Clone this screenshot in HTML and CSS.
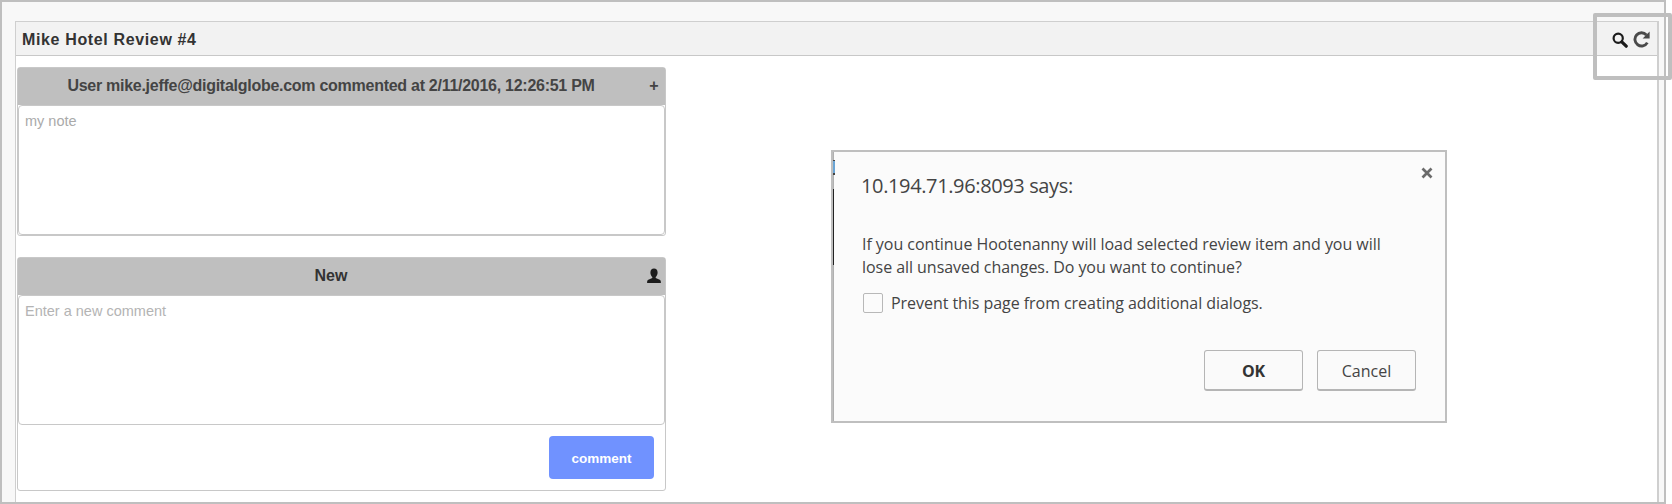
FILE: index.html
```html
<!DOCTYPE html>
<html lang="en">
<head>
<meta charset="utf-8">
<title>Mike Hotel Review #4</title>
<link rel="stylesheet" href="styles.css">
</head>
<body>
<main class="frame">
  <section class="panel">
    <header class="panel-head">
      <h1 class="panel-title">Mike Hotel Review #4</h1>
      <div class="tools">
        <svg class="search" viewBox="0 0 16 16"><circle cx="6.2" cy="6.2" r="4.6" fill="none" stroke="#1c1c1c" stroke-width="2.2"/><path d="M9.8 9.8l4.4 4.4" stroke="#1c1c1c" stroke-width="3.2" stroke-linecap="round"/></svg>
        <svg class="refresh" viewBox="0 0 17 17"><path d="M13.4 3.9A6.6 6.6 0 1 0 14.3 11.6" fill="none" stroke="#4a4a4a" stroke-width="2.9"/><path d="M16.6 .4V7.4H9.6z" fill="#4a4a4a"/></svg>
      </div>
    </header>
    <div class="comments">
      <article class="card">
        <header class="card-head"><span class="card-title user">User mike.jeffe@digitalglobe.com commented at 2/11/2016, 12:26:51 PM</span><span class="plus">+</span></header>
        <div class="note">my note</div>
      </article>
      <article class="card new-card">
        <header class="card-head"><span class="card-title new">New</span>
          <svg class="person" viewBox="0 0 14 16"><path d="M7 .5c2.2 0 3.6 1.6 3.6 4 0 1.900-.8 3.600-1.900 4.400v1.200l4 1.700c1 .5 1.200 1.400 1.200 3.200H.1c0-1.800.2-2.700 1.200-3.200l4-1.700V8.900C4.200 8.100 3.400 6.400 3.400 4.500c0-2.400 1.400-4 3.600-4z" fill="#1c1c1c"/></svg>
        </header>
        <div class="note placeholder">Enter a new comment</div>
        <div class="actions"><button class="submit">comment</button></div>
      </article>
    </div>
  </section>
</main>
<div class="highlight"></div>
<section class="dialog" role="dialog">
  <svg class="close" viewBox="0 0 12 12"><path d="M1.500 1.500l9 9M10.500 1.500l-9 9" stroke="#6b6b6b" stroke-width="2.700"/></svg>
  <h2 class="dialog-title">10.194.71.96:8093 says:</h2>
  <p class="message">If you continue Hootenanny will load selected review item and you will<br>lose all unsaved changes. Do you want to continue?</p>
  <div class="prevent"><i class="checkbox"></i><span>Prevent this page from creating additional dialogs.</span></div>
  <div class="buttons"><button class="button ok">OK</button><button class="button">Cancel</button></div>
  <i class="edge edge-gray"></i><i class="edge edge-blue"></i><i class="edge edge-dark"></i>
</section>
</body>
</html>
```
FILE: styles.css
```css
* { box-sizing: border-box; }
body { margin: 0; width: 1672px; height: 504px; overflow: hidden; background: #fff; font-family: "Liberation Sans", Arial, sans-serif; position: relative; }
h1, h2, p { margin: 0; }
svg { display: block; }
.frame { width: 1666px; height: 504px; padding: 19px 5px 0 13px; border: 2px solid #bfbfbf; background: #f8f8f8; }
.panel { height: 481px; border: 1px solid #cfcfcf; border-width: 1px 2px 0 1px; background: #fff; }
.panel-head { display: flex; align-items: center; justify-content: space-between; height: 34px; padding: 2px 7px 0 6px; background: #f2f2f2; border-bottom: 1px solid #c8c8c8; }
.panel-title { font-size: 16px; line-height: 20px; color: #333; white-space: nowrap; letter-spacing: .64px; }
.tools { display: flex; gap: 5px; align-items: center; }
.search { width: 16px; height: 16px; }
.refresh { width: 17px; height: 17px; }
.comments { width: 650px; padding: 11px 0 0 1px; display: flex; flex-direction: column; gap: 21px; }
.card { border: 1px solid #c8c8c8; border-radius: 3px; height: 169px; }
.new-card { height: 234px; }
.card-head { display: grid; grid-template-columns: 1fr 14px; align-items: center; height: 37px; padding: 0 4px 1px 0; background: #bfbfbf; }
.card-title { justify-self: center; padding-right: 3px; font-size: 16px; line-height: 20px; font-weight: 700; color: #444; white-space: nowrap; }
.user { letter-spacing: -.27px; }
.new { color: #333; }
.plus { font-size: 16px; font-weight: 700; color: #444; line-height: 20px; text-align: center; }
.person { width: 14px; height: 16px; }
.note { height: 130px; padding: 5px 6px; border: 1px solid #c8c8c8; border-radius: 4px; font-size: 14.500px; line-height: 20px; color: #aaa; }
.placeholder { color: #b4b4b4; }
.actions { display: flex; justify-content: flex-end; padding: 11px 11px 0 0; }
.submit { width: 105px; height: 43px; border: 0; border-radius: 4px; background: #7092ff; color: #fff; font: 700 13.500px "Liberation Sans", Arial, sans-serif; padding: 2px 0 0; }
.highlight { position: absolute; left: 1593px; top: 13px; width: 79px; height: 67px; border: 4px solid #bfbfbf; border-radius: 2px; }
.dialog { position: absolute; left: 831px; top: 150px; width: 616px; height: 273px; border: 2px solid #bfbfbf; background: #fbfbfb; padding: 21px 28px 0; font-family: "Open Sans", "Noto Sans", sans-serif; color: #444; white-space: nowrap; }
.close { position: absolute; right: 12px; top: 15px; width: 12px; height: 12px; }
.dialog-title { font-size: 20px; line-height: 26px; font-weight: 400; letter-spacing: -.37px; }
.message { margin: 34px 0 0 1px; font-size: 16px; line-height: 22.500px; letter-spacing: -.05px; }
.prevent { display: flex; align-items: center; gap: 8px; height: 20px; margin: 15px 0 0 2px; font-size: 16px; letter-spacing: -.05px; }
.checkbox { width: 20px; height: 20px; border: 1px solid #b8b8b8; border-radius: 2px; }
.buttons { display: flex; justify-content: flex-end; gap: 14px; margin-top: 37px; padding-right: 1px; }
.button { width: 99px; height: 41px; padding: 1px 0 0; border: 1px solid #b5b5b5; border-bottom-width: 2px; border-radius: 3px; background: #fafafa; color: #444; font: 400 16px "Open Sans", sans-serif; }
.ok { color: #333; font-weight: 700; letter-spacing: -.3px; }
.edge { position: absolute; left: 0; width: 1px; }
.edge-gray { top: 0; height: 269px; background: #b0b0b0; }
.edge-blue { top: 8px; width: 2px; height: 15px; background: #6ba5d5; border: solid #444; border-width: 1px 0 2px; }
.edge-dark { top: 37px; height: 76px; background: #222; }
```
